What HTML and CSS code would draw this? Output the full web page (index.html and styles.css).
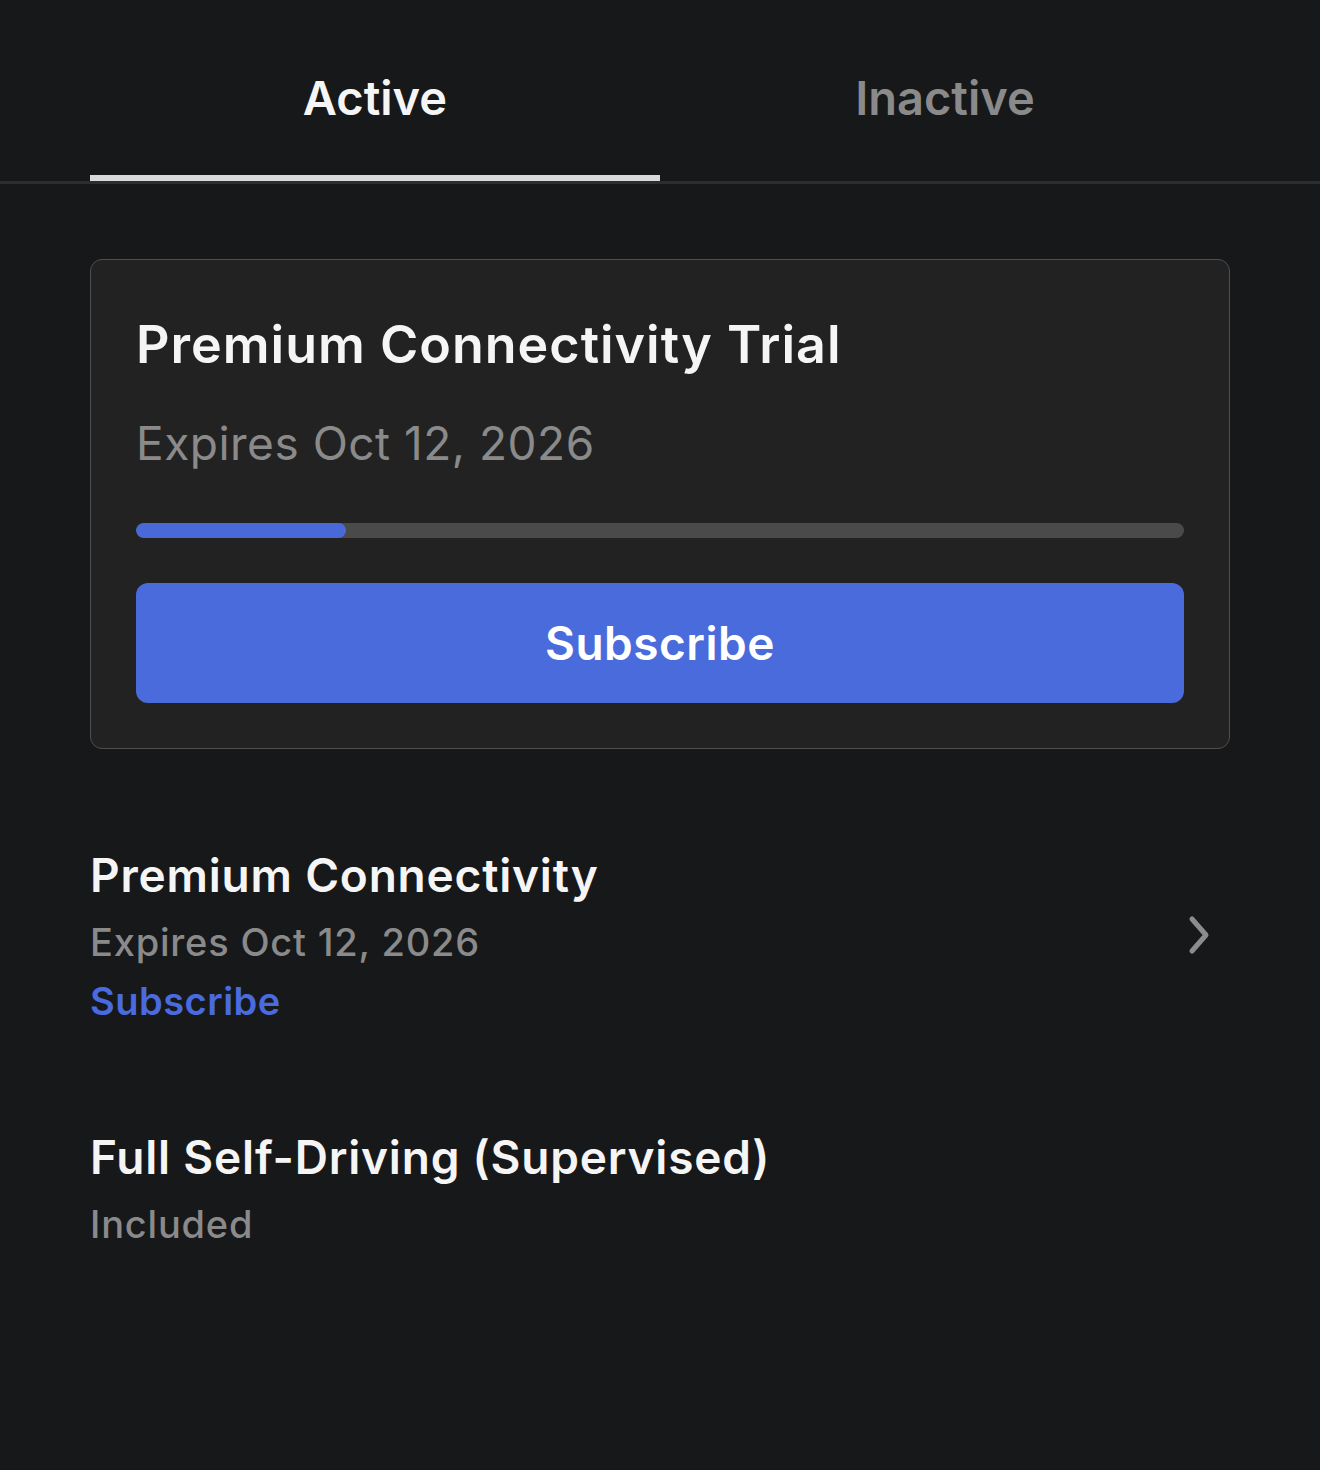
FILE: index.html
```html
<!DOCTYPE html>
<html lang="en">
<head>
    <meta charset="UTF-8">
    <meta name="viewport" content="width=device-width, initial-scale=1.0">
    <title>Upgrades</title>
    <link rel="stylesheet" href="styles.css">
</head>
<body>
    <nav class="tabs">
        <div class="tab active">Active</div>
        <div class="tab">Inactive</div>
    </nav>
    <main class="content">
        <section class="card">
            <h2 class="card-title">Premium Connectivity Trial</h2>
            <p class="card-sub">Expires Oct 12, 2026</p>
            <div class="progress"><div class="progress-fill" style="width: 20%"></div></div>
            <button class="btn">Subscribe</button>
        </section>
        <div class="item">
            <div class="item-text">
                <h3 class="item-title">Premium Connectivity</h3>
                <p class="item-sub">Expires Oct 12, 2026</p>
                <a class="item-link">Subscribe</a>
            </div>
            <svg class="chevron" width="30" height="44" viewBox="0 0 30 44">
                <polyline points="8,4 22,20 8,36" fill="none" stroke="#8c8c8c" stroke-width="5" stroke-linecap="round" stroke-linejoin="round"/>
            </svg>
        </div>
        <div class="item">
            <div class="item-text">
                <h3 class="item-title">Full Self-Driving (Supervised)</h3>
                <p class="item-sub">Included</p>
            </div>
        </div>
    </main>
</body>
</html>
```

FILE: styles.css
```css
body {
    margin: 0;
    background-color: #17181a;
    color: #f2f2f2;
    font-family: 'Inter', 'Noto Sans', sans-serif;
}
.tabs {
    display: flex;
    padding: 0 90px;
    border-bottom: 3px solid #2c2d2f;
}
.tab {
    flex: 1;
    text-align: center;
    font-size: 47px;
    font-weight: 600;
    line-height: 60px;
    padding: 68px 0 47px;
    color: #8a8a8a;
    border-bottom: 6px solid transparent;
}
.tab.active {
    color: #f5f5f5;
    border-bottom-color: #d9d9d9;
}
.content {
    padding: 75px 90px 0;
}
.card {
    background: #222222;
    border: 1px solid #4e4e4e;
    border-radius: 12px;
    padding: 54px 45px 45px;
}
.card-title {
    margin: 0;
    font-size: 52px;
    line-height: 62px;
    font-weight: 600;
    letter-spacing: 1px;
    color: #f5f5f5;
}
.card-sub {
    margin: 39px 0 0;
    font-size: 46px;
    line-height: 56px;
    letter-spacing: 0.5px;
    color: #8a8a8a;
}
.progress {
    margin-top: 52px;
    height: 15px;
    border-radius: 8px;
    background: #4a4a4a;
    overflow: hidden;
}
.progress-fill {
    height: 100%;
    border-radius: 8px;
    background: #4a69d9;
}
.btn {
    display: block;
    width: 100%;
    margin-top: 45px;
    height: 120px;
    border: none;
    border-radius: 12px;
    background: #4a6bdb;
    color: #fff;
    font-family: inherit;
    font-size: 46px;
    font-weight: 600;
    letter-spacing: 0.5px;
}
.item {
    display: flex;
    align-items: center;
    justify-content: space-between;
    margin-top: 98px;
}
.item + .item {
    margin-top: 103px;
}
.item-title {
    margin: 0;
    font-size: 46px;
    line-height: 56px;
    font-weight: 600;
    letter-spacing: 0.8px;
    color: #f5f5f5;
}
.item-sub {
    margin: 14px 0 0;
    font-size: 38px;
    line-height: 50px;
    font-weight: 500;
    letter-spacing: 0.8px;
    color: #8a8a8a;
}
.item-link {
    display: block;
    margin-top: 9px;
    font-size: 38px;
    line-height: 50px;
    font-weight: 600;
    letter-spacing: 0.5px;
    color: #4a6be0;
}
.chevron {
    margin-right: 16px;
}
```
